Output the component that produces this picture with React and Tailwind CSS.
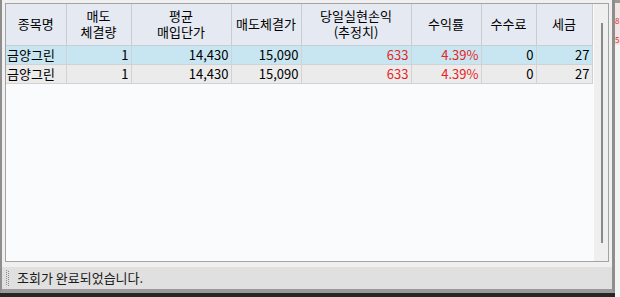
const columns = [
  { key: "name", label: ["종목명"], width: 60, align: "left" },
  { key: "qty", label: ["매도", "체결량"], width: 65 },
  { key: "avg", label: ["평균", "매입단가"], width: 100 },
  { key: "sell", label: ["매도체결가"], width: 70 },
  { key: "pnl", label: ["당일실현손익", "(추정치)"], width: 110, red: true },
  { key: "rate", label: ["수익률"], width: 70, red: true },
  { key: "fee", label: ["수수료"], width: 55 },
  { key: "tax", label: ["세금"], width: 56 },
];

const rows = [
  { name: "금양그린", qty: "1", avg: "14,430", sell: "15,090", pnl: "633", rate: "4.39%", fee: "0", tax: "27" },
  { name: "금양그린", qty: "1", avg: "14,430", sell: "15,090", pnl: "633", rate: "4.39%", fee: "0", tax: "27" },
];

function Grip() {
  const dots = [];
  for (let i = 0; i < 8; i++) {
    dots.push(<rect key={"a" + i} x="0" y={i * 2} width="1" height="1" fill="#8a8a8a" />);
    dots.push(<rect key={"b" + i} x="2" y={i * 2 + 1} width="1" height="1" fill="#8a8a8a" />);
  }
  return (
    <svg width="3" height="16" className="shrink-0">
      {dots}
    </svg>
  );
}

export default function App() {
  return (
    <div
      className="w-[620px] h-[297px] bg-[#262626] flex overflow-hidden text-[13px] text-black"
      style={{ fontFamily: '"Noto Sans CJK KR", "Noto Sans", sans-serif' }}
    >
      <div className="w-[615px] h-[293px] shrink-0 bg-[#f0f0f0] border-l-2 border-r-[3px] border-b-4 border-l-[#8e8e8e] border-r-[#8e8e8e] border-b-[#9a9a9a] flex flex-col">
        {/* grid */}
        <div className="mt-[3px] mx-[3px] h-[259px] border border-[#a3a3a3] flex">
          <div className="flex-1 bg-[#fafbfd]">
            <table className="border-collapse table-fixed" style={{ width: 586 }}>
              <colgroup>
                {columns.map((c) => (
                  <col key={c.key} style={{ width: c.width }} />
                ))}
              </colgroup>
              <thead>
                <tr className="h-[41px] bg-[#e4e9f2]">
                  {columns.map((c) => (
                    <th
                      key={c.key}
                      className="font-normal text-center leading-[16px] border-r border-b border-[#c9ccd2] p-0"
                    >
                      {c.label.map((l) => (
                        <div key={l}>{l}</div>
                      ))}
                    </th>
                  ))}
                </tr>
              </thead>
              <tbody>
                {rows.map((r, i) => (
                  <tr
                    key={i}
                    className={"h-[19px] " + (i === 0 ? "bg-[#c8e6f1]" : "bg-[#ebebeb]")}
                  >
                    {columns.map((c) => (
                      <td
                        key={c.key}
                        className={
                          "p-0 leading-[18px] border-r border-b border-[#d2d2d2] whitespace-nowrap " +
                          (c.align === "left" ? "text-left pl-[1px] " : "text-right pr-[2px] ") +
                          (c.red ? "text-[#e8241c]" : "")
                        }
                      >
                        {r[c.key]}
                      </td>
                    ))}
                  </tr>
                ))}
              </tbody>
            </table>
          </div>
          <div className="w-[14px] bg-[#efefef] flex justify-center pt-[19px]">
            <div className="w-[2px] h-[220px] bg-[#8a8a8a] ml-[1px]" />
          </div>
        </div>
        {/* status bar */}
        <div className="mt-[5px] h-[22px] bg-[#e0e0e0] flex items-center pl-[4px] gap-[8px]">
          <Grip />
          <span className="text-[#1a1a1a]">조회가 완료되었습니다.</span>
        </div>
      </div>
      <div className="flex-1 bg-[#f4f4f4] flex flex-col">
        <div className="h-[3px] bg-[#9a9a9a]" />
        <div className="h-[42px] bg-[#f3e4e4] text-[#e8241c] text-[8px] leading-[19px] pt-[8px] overflow-hidden">
          <div>8</div>
          <div>5</div>
        </div>
      </div>
    </div>
  );
}
